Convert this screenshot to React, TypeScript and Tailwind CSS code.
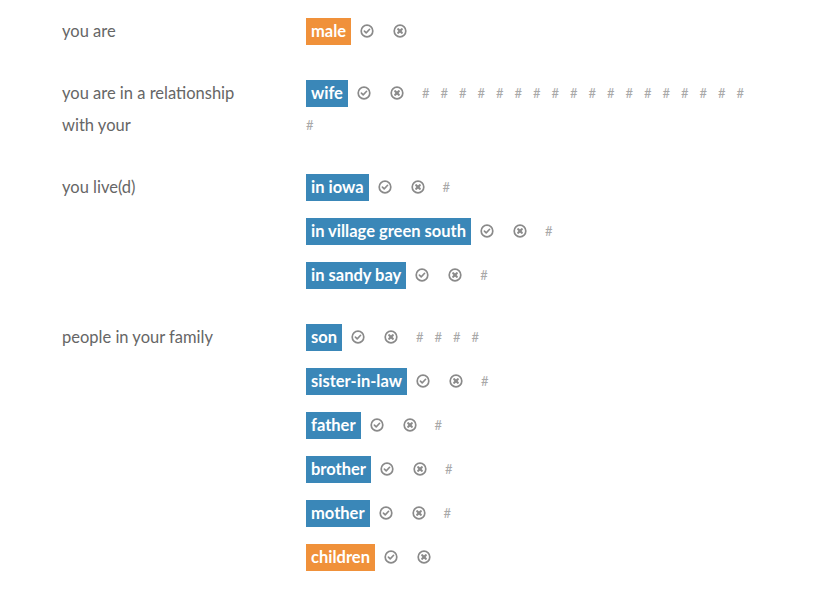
import React from 'react';

type Tag = { text: string; color: 'blue' | 'orange'; hashes: number };

type Section = { label: string; rows: Tag[] };

const sections: Section[] = [
  { label: 'you are', rows: [{ text: 'male', color: 'orange', hashes: 0 }] },
  {
    label: 'you are in a relationship with your',
    rows: [{ text: 'wife', color: 'blue', hashes: 19 }],
  },
  {
    label: 'you live(d)',
    rows: [
      { text: 'in iowa', color: 'blue', hashes: 1 },
      { text: 'in village green south', color: 'blue', hashes: 1 },
      { text: 'in sandy bay', color: 'blue', hashes: 1 },
    ],
  },
  {
    label: 'people in your family',
    rows: [
      { text: 'son', color: 'blue', hashes: 4 },
      { text: 'sister-in-law', color: 'blue', hashes: 1 },
      { text: 'father', color: 'blue', hashes: 1 },
      { text: 'brother', color: 'blue', hashes: 1 },
      { text: 'mother', color: 'blue', hashes: 1 },
      { text: 'children', color: 'orange', hashes: 0 },
    ],
  },
];

function CheckIcon() {
  return (
    <svg width="14" height="14" viewBox="0 0 14 14" fill="none">
      <circle cx="7" cy="7" r="5.8" stroke="#8a8a8a" strokeWidth="1.7" />
      <path d="M4.4 7.1 L6.2 8.9 L9.6 5.3" stroke="#8a8a8a" strokeWidth="1.6" strokeLinecap="round" strokeLinejoin="round" />
    </svg>
  );
}

function RemoveIcon() {
  return (
    <svg width="14" height="14" viewBox="0 0 14 14" fill="none">
      <circle cx="7" cy="7" r="5.8" stroke="#8a8a8a" strokeWidth="1.7" />
      <path d="M5.2 5.2 L8.8 8.8 M8.8 5.2 L5.2 8.8" stroke="#8a8a8a" strokeWidth="2.2" strokeLinecap="round" />
    </svg>
  );
}

function TagRow({ tag }: { tag: Tag }) {
  return (
    <div className="flex flex-wrap items-center">
      <div className="h-[32px] flex items-center">
        <span
          className={
            'h-[27px] leading-[27px] px-[5px] text-[16.5px] font-bold text-white ' +
            (tag.color === 'orange' ? 'bg-[#f0913a]' : 'bg-[#3a87b8]')
          }
        >
          {tag.text}
        </span>
        <span className="ml-[9px] flex">
          <CheckIcon />
        </span>
        <span className="ml-[19px] mr-[18px] flex">
          <RemoveIcon />
        </span>
      </div>
      {Array.from({ length: tag.hashes }).map((_, i) => (
        <span key={i} className="h-[32px] leading-[32px] w-[18.5px] text-[13px] text-[#a8a8a8]">
          #
        </span>
      ))}
    </div>
  );
}

export default function App() {
  return (
    <div className="min-h-screen bg-white pt-[15px] pl-[62px]" style={{ fontFamily: 'Lato, "Noto Sans", sans-serif' }}>
      <div className="flex flex-col gap-[30px]">
        {sections.map((s) => (
          <div key={s.label} className="flex">
            <div className="w-[244px] shrink-0 pr-[50px] text-[16.5px] leading-[32px] text-[#666666]">{s.label}</div>
            <div className="w-[458px] flex flex-col gap-[12px]">
              {s.rows.map((r) => (
                <TagRow key={r.text} tag={r} />
              ))}
            </div>
          </div>
        ))}
      </div>
    </div>
  );
}
